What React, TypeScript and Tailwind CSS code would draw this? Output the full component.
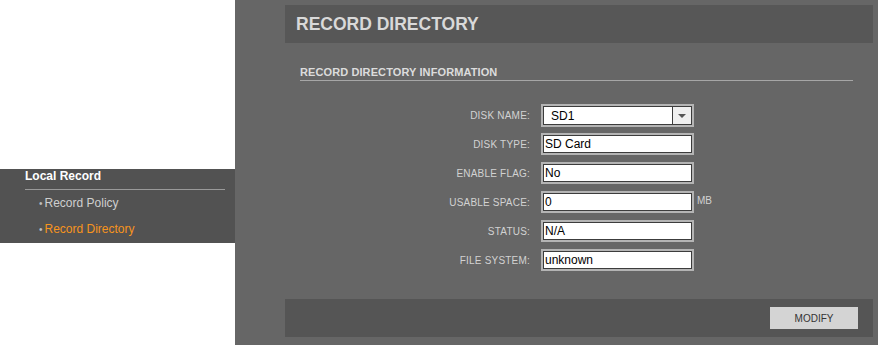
import React from "react";

const fields = [
	{ label: "DISK TYPE:", value: "SD Card" },
	{ label: "ENABLE FLAG:", value: "No" },
	{ label: "USABLE SPACE:", value: "0", unit: "MB" },
	{ label: "STATUS:", value: "N/A" },
	{ label: "FILE SYSTEM:", value: "unknown" },
];

const Row = ({ label, children }: { label: string; children: React.ReactNode }) => (
	<div className="flex h-[29px] items-start">
		<div className="flex h-[22px] w-[245px] items-center justify-end text-[10px] tracking-[0.2px] text-[#d2d2d2]">
			{label}
		</div>
		<div className="ml-[11px] flex items-start">{children}</div>
	</div>
);

const App = () => {
	return (
		<div
			className="flex h-[345px] w-[878px] overflow-hidden bg-white"
			style={{ fontFamily: '"Liberation Sans", Arial, sans-serif' }}
		>
			{/* sidebar */}
			<aside className="w-[235px] shrink-0 bg-white pt-[169px]">
				<div className="h-[74px] bg-[#525252] pl-[25px] pr-[10px]">
					<div className="border-b border-[#9a9a9a] pb-[6px] text-[12px] font-bold leading-[14px] text-white">
						Local Record
					</div>
					<ul className="pl-[14px] pt-[6px] text-[12px] leading-[14px]">
						<li className="text-[#cfcfcf]">
							<span className="mr-[2px] text-[10px] text-[#bdbdbd]">•</span>Record Policy
						</li>
						<li className="mt-[11px] text-[#f7941d]">
							<span className="mr-[2px] text-[10px] text-[#bdbdbd]">•</span>Record Directory
						</li>
					</ul>
				</div>
			</aside>

			{/* main */}
			<main className="flex flex-1 flex-col bg-[#666666] pl-[50px] pr-[5px] pt-[5px]">
				<div className="flex h-[38px] items-center bg-[#575757] px-[11px]">
					<h1 className="text-[17.5px] font-bold text-[#d9d9d9]">RECORD DIRECTORY</h1>
				</div>

				<div className="ml-[15px] mr-[20px] mt-[23px] border-b border-[#a6a6a6] pb-[1px]">
					<h2 className="text-[11px] font-bold leading-[13px] tracking-[0.1px] text-[#dcdcdc]">
						RECORD DIRECTORY INFORMATION
					</h2>
				</div>

				<div className="mt-[23px] flex flex-col">
					<Row label="DISK NAME:">
						<div className="flex h-[23px] w-[153px] border-2 border-[#b4b4b4] bg-white shadow-[inset_0_0_0_1px_#3c3c3c]">
							<div className="flex flex-1 items-center pl-[8px] text-[12px] text-black">SD1</div>
							<div className="my-[1px] mr-[1px] flex w-[19px] items-center justify-center border-l border-[#3c3c3c] bg-[#efefef]">
								<svg width="8" height="4" viewBox="0 0 8 4">
									<path d="M0 0h8L4 4z" fill="#555" />
								</svg>
							</div>
						</div>
					</Row>
					{fields.map((f) => (
						<Row key={f.label} label={f.label}>
							<div className="flex h-[22px] w-[153px] items-center border-2 border-[#b4b4b4] bg-white pl-[2px] text-[12px] text-black shadow-[inset_0_0_0_1px_#3c3c3c]">
								{f.value}
							</div>
							{f.unit && (
								<span className="ml-[3px] mt-[2px] text-[10px] text-[#d2d2d2]">{f.unit}</span>
							)}
						</Row>
					))}
				</div>

				<div className="mt-[21px] flex h-[38px] items-center justify-end bg-[#555555] pr-[15px]">
					<button className="h-[22px] w-[88px] bg-[#d4d4d4] text-[10px] text-[#333]">MODIFY</button>
				</div>
			</main>
		</div>
	);
};

export default App;
